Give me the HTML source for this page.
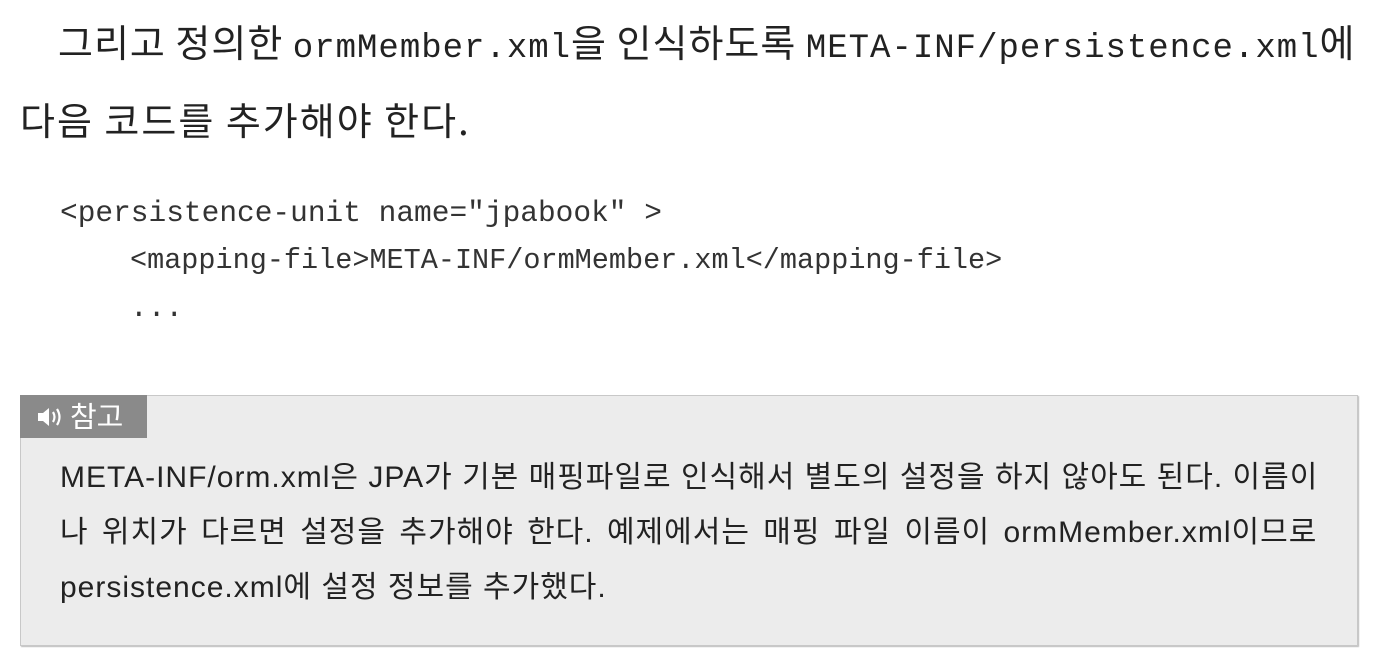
<!DOCTYPE html>
<html><head><meta charset="utf-8"><style>
body{margin:0;width:1379px;height:667px;background:#fff;position:relative;overflow:hidden;color:#222}
.l{position:absolute;white-space:nowrap;line-height:1}
.k{font-family:"Noto Sans CJK KR",sans-serif;font-size:38px}
.m{font-family:"Liberation Mono",monospace}
.s{font-family:"Liberation Sans","Noto Sans CJK KR",sans-serif;font-size:30px;letter-spacing:1px}
#box{position:absolute;left:20px;top:395px;width:1336px;height:249px;background:#ececec;border:1px solid #c8c8c8;box-shadow:1px 1px 1px #bbb}
#lab{position:absolute;left:20px;top:395px;width:127px;height:43px;background:#8a8a8a;color:#fff;font-family:"Noto Sans CJK KR",sans-serif;font-size:29px;line-height:41px}
</style></head><body>
<div class="l k" style="left:58px;top:22px;letter-spacing:1px">그리고 정의한 <span class="m" style="font-size:34px">ormMember.xml</span>을 인식하도록 <span class="m" style="font-size:34px">META-INF/persistence.xml</span>에</div>
<div class="l k" style="left:20px;top:100px;letter-spacing:2px">다음 코드를 추가해야 한다.</div>
<div class="l m" style="left:60px;top:199px;font-size:29.5px;color:#333">&lt;persistence-unit name="jpabook" &gt;</div>
<div class="l m" style="left:130px;top:247px;font-size:28.5px;color:#333">&lt;mapping-file&gt;META-INF/ormMember.xml&lt;/mapping-file&gt;</div>
<div class="l m" style="left:130px;top:294px;font-size:29.5px;color:#333">...</div>
<div id="box"></div>
<div id="lab"><svg style="position:absolute;left:16px;top:11px" width="30" height="22" viewBox="0 0 30 22"><path d="M2 7h5l6-5v18l-6-5H2z" fill="#fff"/><path d="M17 6q3 5 0 10M21 3q5 8 0 16" stroke="#fff" stroke-width="2.2" fill="none"/></svg><span style="position:absolute;left:50px">참고</span></div>
<div class="l s" style="left:60px;top:463px">META-INF/orm.xml은 JPA가 기본 매핑파일로 인식해서 별도의 설정을 하지 않아도 된다. 이름이</div>
<div class="l s" style="left:60px;top:518px;word-spacing:4px">나 위치가 다르면 설정을 추가해야 한다. 예제에서는 매핑 파일 이름이 ormMember.xml이므로</div>
<div class="l s" style="left:60px;top:573px">persistence.xml에 설정 정보를 추가했다.</div>
</body></html>
